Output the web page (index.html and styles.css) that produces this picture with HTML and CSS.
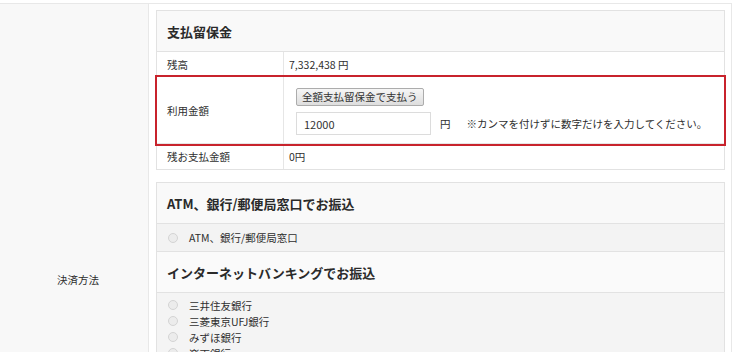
FILE: index.html
```html
<!DOCTYPE html>
<html lang="ja">

<head>
    <meta charset="UTF-8">
    <meta name="viewport" content="width=device-width, initial-scale=1.0">
    <title>決済方法</title>
    <link rel="stylesheet" href="styles.css">
</head>

<body>
    <div class="form-table">
        <div class="form-label">決済方法</div>

        <div class="form-value">
            <!-- 支払留保金 -->
            <div class="box">
                <div class="box-head">支払留保金</div>
                <div class="row">
                    <div class="row-label">残高</div>
                    <div class="row-value">7,332,438 円</div>
                </div>
                <div class="row row-mark">
                    <div class="row-label">利用金額</div>
                    <div class="row-value row-value-form">
                        <div><button class="btn" type="button">全額支払留保金で支払う</button></div>
                        <div class="amount-line">
                            <input class="amount" type="text" value="12000">
                            <span class="yen">円</span>
                            <span class="note">※カンマを付けずに数字だけを入力してください。</span>
                        </div>
                    </div>
                </div>
                <div class="row row-last">
                    <div class="row-label">残お支払金額</div>
                    <div class="row-value">0円</div>
                </div>
            </div>

            <!-- 振込 -->
            <div class="box">
                <div class="box-head">ATM、銀行/郵便局窓口でお振込</div>
                <label class="radio-row"><span class="radio"></span>ATM、銀行/郵便局窓口</label>

                <div class="box-head box-head-sub">インターネットバンキングでお振込</div>
                <div class="radio-list">
                    <label class="radio-item"><span class="radio"></span>三井住友銀行</label>
                    <label class="radio-item"><span class="radio"></span>三菱東京UFJ銀行</label>
                    <label class="radio-item"><span class="radio"></span>みずほ銀行</label>
                    <label class="radio-item"><span class="radio"></span>楽天銀行</label>
                    <label class="radio-item"><span class="radio"></span>りそな銀行</label>
                    <label class="radio-item"><span class="radio"></span>埼玉りそな銀行</label>
                    <label class="radio-item"><span class="radio"></span>ジャパンネット銀行</label>
                    <label class="radio-item"><span class="radio"></span>ゆうちょ銀行</label>
                </div>
            </div>
        </div>
    </div>
</body>

</html>
```

FILE: styles.css
```css
body {
    margin: 0;
    background: #fff;
    color: #2e2e2e;
    font-family: "Noto Sans CJK JP", "Liberation Sans", sans-serif;
    font-size: 10.5px;
}

.form-table {
    display: grid;
    grid-template-columns: 149px 1fr;
    width: 731px;
    min-height: 550px;
    margin-top: 3px;
    border-top: 1px solid #e8e8e8;
    border-right: 1px solid #e8e8e8;
}

.form-label {
    display: flex;
    align-items: center;
    padding-left: 57px;
    background: #f8f8f8;
    border-right: 1px solid #e8e8e8;
}

.form-value {
    padding: 6px 6px 7px 7px;
}

.box {
    border: 1px solid #e2e2e2;
    margin-bottom: 12px;
}

.box-head {
    height: 40px;
    display: flex;
    align-items: center;
    padding-left: 10px;
    background: #f9f9f9;
    border-bottom: 1px solid #e2e2e2;
    font-size: 13px;
    font-weight: bold;
    color: #2a2a2a;
}

.box-head-sub {
    background: #fafafa;
}

.row {
    display: grid;
    grid-template-columns: 127px 1fr;
    border-bottom: 1px solid #e6e6e6;
}

.row-last {
    border-bottom: none;
}

.row-label {
    display: flex;
    align-items: center;
    padding-left: 10px;
    border-right: 1px solid #e6e6e6;
}

.row-value {
    display: flex;
    align-items: center;
    min-height: 24px;
    padding-left: 5px;
}

.row-last .row-value {
    min-height: 25px;
}

.row-value-form {
    flex-direction: column;
    align-items: flex-start;
    padding: 11px 0 8px 12px;
}

.row-mark {
    outline: 2px solid #c8232c;
}

.btn {
    height: 18px;
    padding: 0 5px;
    border: 1px solid #acacac;
    border-radius: 2px;
    background: linear-gradient(#f6f6f6, #dedede);
    color: #333;
    font-family: inherit;
    font-size: 10.5px;
    line-height: 16px;
}

.amount-line {
    display: flex;
    align-items: center;
    margin-top: 6px;
}

.amount {
    width: 135px;
    height: 23px;
    box-sizing: border-box;
    padding: 0 7px;
    border: 1px solid #dcdcdc;
    font-family: inherit;
    font-size: 11px;
    color: #333;
}

.yen {
    margin-left: 9px;
}

.note {
    margin-left: 16px;
}

.radio-row {
    display: flex;
    align-items: center;
    height: 27px;
    padding-left: 11px;
    background: #f3f3f3;
    border-bottom: 1px solid #e2e2e2;
}

.radio-list {
    padding: 4px 0 6px 11px;
    background: #f4f4f4;
}

.radio-item {
    display: flex;
    align-items: center;
    height: 16px;
}

.radio {
    width: 8px;
    height: 8px;
    margin-right: 11px;
    border: 1px solid #d4d4d4;
    border-radius: 50%;
    background: #ececec;
}
```
